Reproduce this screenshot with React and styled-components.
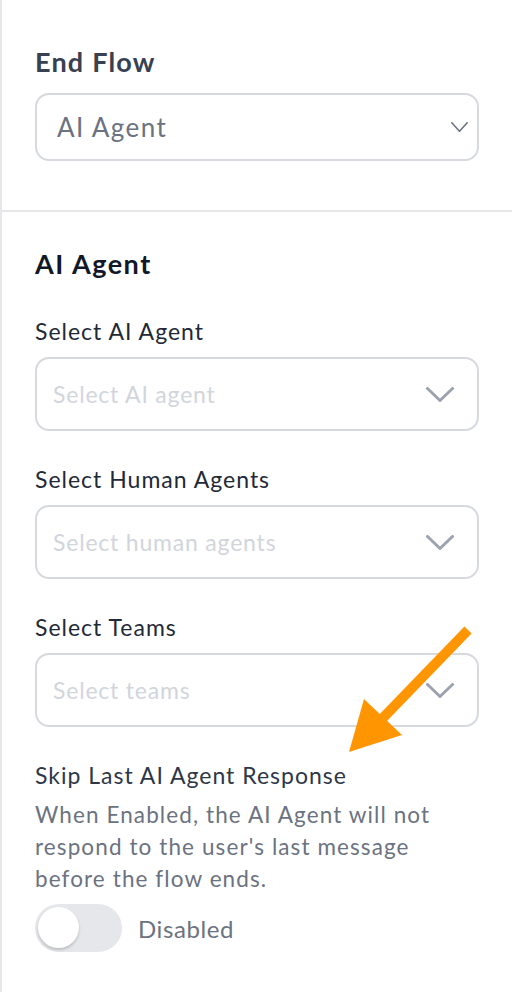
import React from 'react';
import styled, { createGlobalStyle } from 'styled-components';

const GlobalStyle = createGlobalStyle`
  html, body {
    margin: 0;
    padding: 0;
    background: #ffffff;
  }
  body {
    font-family: Lato, "Noto Sans", "Liberation Sans", sans-serif;
  }
  * {
    box-sizing: border-box;
  }
`;

const Panel = styled.div`
  position: relative;
  width: 512px;
  min-height: 992px;
  border-left: 2px solid #e5e7eb;
  background: #ffffff;
`;

const Section = styled.section`
  display: flex;
  flex-direction: column;
  padding: ${p => p.$top}px 33px ${p => p.$bottom}px 33px;
  border-bottom: ${p => (p.$divider ? '2px solid #e5e7eb' : 'none')};
`;

const Heading = styled.h2`
  margin: 0;
  font-size: 27px;
  line-height: 36px;
  font-weight: 700;
  letter-spacing: ${p => p.$spacing}px;
  color: ${p => p.$color};
`;

const Field = styled.div`
  display: flex;
  flex-direction: column;
  gap: 10px;
  margin-top: ${p => p.$gap}px;
`;

const Label = styled.label`
  font-size: 23px;
  line-height: 32px;
  letter-spacing: 1px;
  color: #1f2937;
`;

const SelectBox = styled.div`
  display: flex;
  align-items: center;
  justify-content: space-between;
  height: ${p => p.$height}px;
  padding: 0 ${p => p.$padRight}px 0 ${p => p.$padLeft}px;
  border: 2px solid #d6d9de;
  border-radius: 14px;
  background: #ffffff;
`;

const Value = styled.span`
  font-size: 26px;
  letter-spacing: 1.4px;
  color: #6b7280;
`;

const Placeholder = styled.span`
  font-size: 23px;
  letter-spacing: 0.8px;
  color: #d1d5db;
`;

const Chevron = ({ w, h, stroke, color }) => (
  <svg width={w} height={h} viewBox={`0 0 ${w} ${h}`} fill="none">
    <path
      d={`M${stroke / 2} ${stroke / 2} L${w / 2} ${h - stroke / 2} L${w - stroke / 2} ${stroke / 2}`}
      stroke={color}
      strokeWidth={stroke}
      strokeLinecap="round"
      strokeLinejoin="round"
    />
  </svg>
);

const SkipLabel = styled.div`
  margin-top: 32px;
  font-size: 23px;
  line-height: 32px;
  letter-spacing: 1px;
  color: #2d3748;
`;

const Description = styled.p`
  margin: 8px 0 0 0;
  font-size: 22.5px;
  line-height: 32px;
  letter-spacing: 1.1px;
  color: #6b7280;
`;

const ToggleRow = styled.div`
  display: flex;
  align-items: center;
  gap: 16px;
  margin-top: 9px;
`;

const Track = styled.div`
  position: relative;
  width: 87px;
  height: 48px;
  border-radius: 24px;
  background: #e5e7eb;
  flex-shrink: 0;
`;

const Knob = styled.div`
  position: absolute;
  top: 3px;
  left: 3px;
  width: 41px;
  height: 41px;
  border-radius: 50%;
  background: #ffffff;
  box-shadow: 0 2px 3px rgba(0, 0, 0, 0.18);
`;

const ToggleText = styled.span`
  font-size: 24px;
  letter-spacing: 0.6px;
  color: #6b7280;
`;

const ArrowLayer = styled.svg`
  position: absolute;
  left: 0;
  top: 0;
  pointer-events: none;
`;

const fields = [
  { label: 'Select AI Agent', placeholder: 'Select AI agent', gap: 33 },
  { label: 'Select Human Agents', placeholder: 'Select human agents', gap: 32 },
  { label: 'Select Teams', placeholder: 'Select teams', gap: 32 },
];

export default function App() {
  return (
    <>
      <GlobalStyle />
      <Panel>
        <Section $top={44} $bottom={49} $divider>
          <Heading $spacing={1.2} $color="#374151">End Flow</Heading>
          <Field $gap={13}>
            <SelectBox $height={68} $padLeft={20} $padRight={9}>
              <Value>AI Agent</Value>
              <Chevron w={17} h={10} stroke={1.6} color="#6b7280" />
            </SelectBox>
          </Field>
        </Section>

        <Section $top={34} $bottom={40}>
          <Heading $spacing={1.5} $color="#111827">AI Agent</Heading>
          {fields.map(f => (
            <Field key={f.label} $gap={f.gap}>
              <Label>{f.label}</Label>
              <SelectBox $height={74} $padLeft={16} $padRight={23}>
                <Placeholder>{f.placeholder}</Placeholder>
                <Chevron w={28} h={15} stroke={3} color="#9ca3af" />
              </SelectBox>
            </Field>
          ))}

          <SkipLabel>Skip Last AI Agent Response</SkipLabel>
          <Description>
            When Enabled, the AI Agent will not respond to the user's last message before the flow ends.
          </Description>
          <ToggleRow>
            <Track>
              <Knob />
            </Track>
            <ToggleText>Disabled</ToggleText>
          </ToggleRow>
        </Section>

        <ArrowLayer width="512" height="992" viewBox="0 0 512 992">
          <line x1="466" y1="630" x2="378" y2="721" stroke="#ff9500" strokeWidth="10" />
          <polygon points="347,752 362,699 400,735" fill="#ff9500" />
        </ArrowLayer>
      </Panel>
    </>
  );
}
